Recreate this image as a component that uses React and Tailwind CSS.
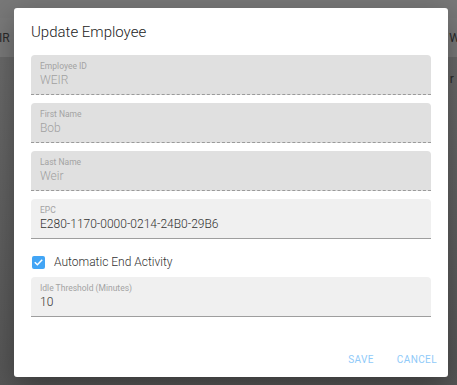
import React from 'react';

function Field({ label, value, disabled }) {
  return (
    <div
      className={
        'h-[40px] rounded-t-[4px] px-[9px] pt-[6px] ' +
        (disabled
          ? 'bg-[#e0e0e0] border-b border-dashed border-[#9a9a9a]'
          : 'bg-[#f0f0f0] border-b border-[#9e9e9e]')
      }
    >
      <div className="text-[8.5px] leading-[11px] text-[#a3a3a3]">{label}</div>
      <div className={'text-[12px] leading-[17px] font-light ' + (disabled ? 'text-[#a0a0a0]' : 'text-[#333]')}>{value}</div>
    </div>
  );
}

export default function App() {
  return (
    <div className="relative w-[457px] h-[385px] overflow-hidden bg-[#626262] font-['Roboto',sans-serif]">
      {/* page behind the overlay */}
      <div className="h-[18px] bg-[#787878]" />
      <div className="h-[40px] bg-[#7a7a7a] border-b border-[#6a6a6a] flex items-center justify-between text-[12px] text-[#2a2a2a]">
        <span className="-ml-[1px]">IR</span>
        <span className="-mr-[3px]">W</span>
      </div>
      <div className="h-[327px] bg-gradient-to-b from-[#6a6a6a] to-[#575757] flex justify-end">
        <span className="mt-[12px] -mr-[4px] text-[12px] text-[#2a2a2a]">r (</span>
      </div>

      {/* dialog */}
      <div className="absolute left-[14px] top-[8px] w-[434px] h-[369px] bg-white rounded-[3px] shadow-[0_10px_30px_rgba(0,0,0,0.35)] px-[17px] pt-[14px] flex flex-col">
        <h2 className="text-[15px] leading-[20px] font-light text-[#222] mb-[13px]">Update Employee</h2>
        <div className="flex flex-col gap-[8px]">
          <Field label="Employee ID" value="WEIR" disabled />
          <Field label="First Name" value="Bob" disabled />
          <Field label="Last Name" value="Weir" disabled />
          <Field label="EPC" value="E280-1170-0000-0214-24B0-29B6" />
        </div>
        <label className="flex items-center gap-[9px] h-[39px] pl-[1px] pt-[7px]">
          <span className="w-[13px] h-[13px] rounded-[2px] bg-[#42a5f5] flex items-center justify-center">
            <svg width="11" height="11" viewBox="0 0 24 24" fill="none" stroke="white" strokeWidth="3.2" strokeLinecap="square">
              <path d="M5 12.5l4.5 4.5L19 7" />
            </svg>
          </span>
          <span className="text-[12px] font-light text-[#333]">Automatic End Activity</span>
        </label>
        <div className="-mt-[1px]">
          <Field label="Idle Threshold (Minutes)" value="10" />
        </div>
        <div className="flex justify-end gap-[23px] mt-[35px] -mr-[6px] text-[10px] tracking-[0.4px] text-[#90caf9]">
          <span>SAVE</span>
          <span>CANCEL</span>
        </div>
      </div>
    </div>
  );
}
